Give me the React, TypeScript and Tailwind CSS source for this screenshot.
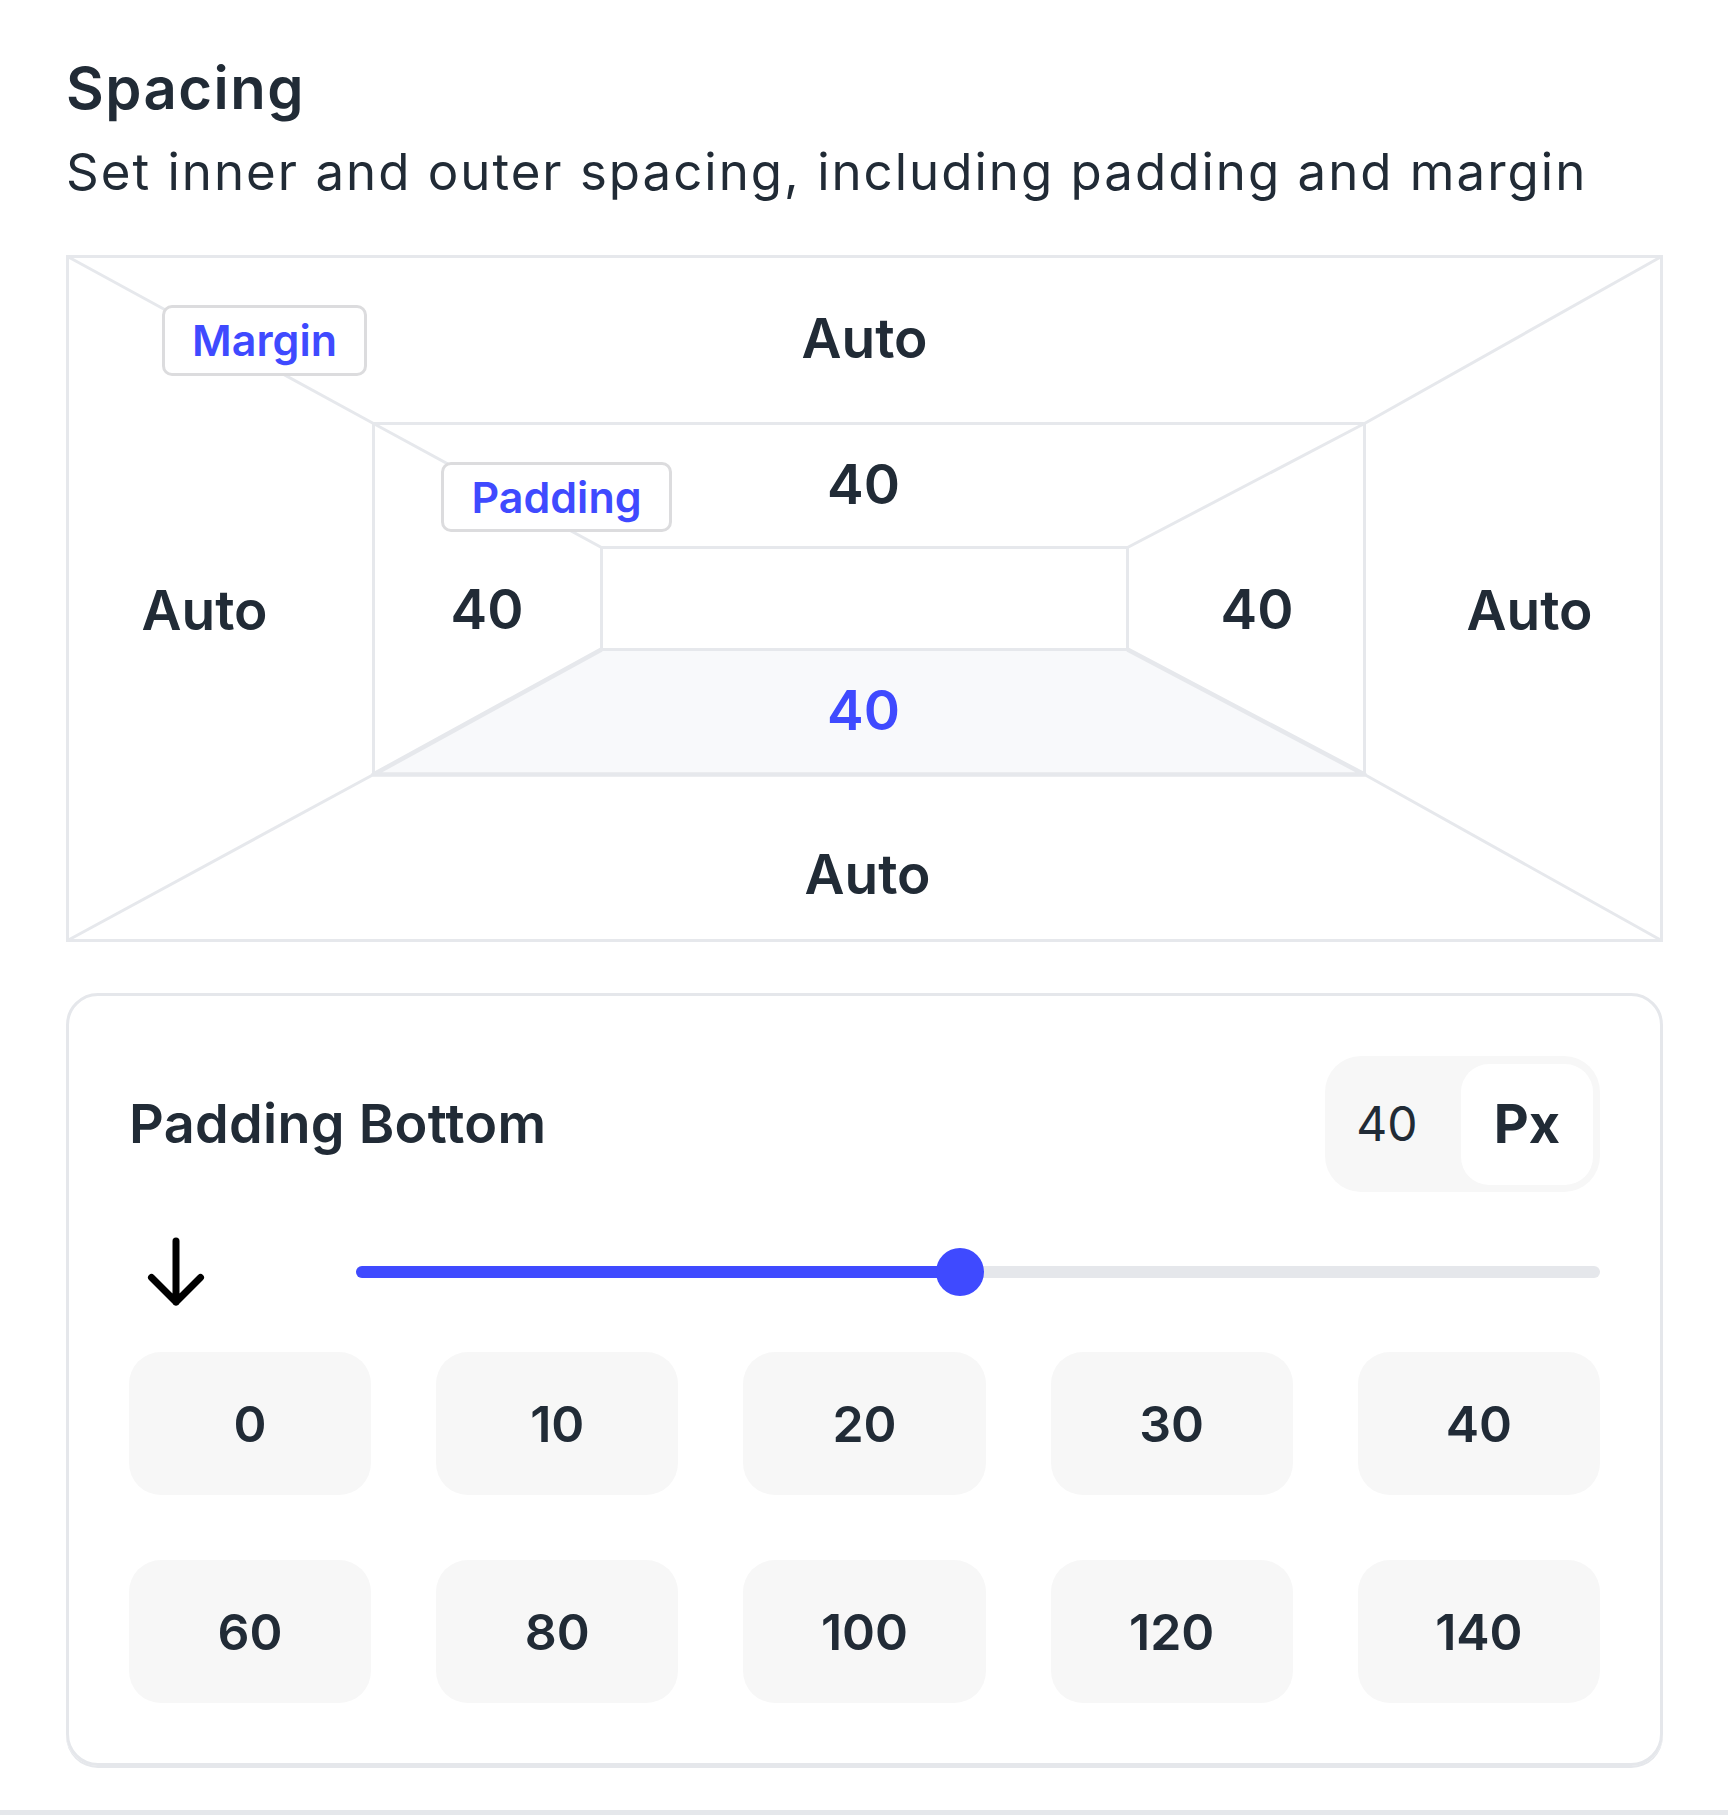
import React from 'react';

const presets = ['0', '10', '20', '30', '40', '60', '80', '100', '120', '140'];

// diagram geometry (inside the outer box)
const W = 1597;
const H = 687;
const P = { l: 307.5, r: 1298.5, t: 168.5, b: 519.5 };
const C = { l: 535.5, r: 1061.5, t: 292.5, b: 394.5 };

function BoxLines() {
  const line = '#e6e8ec';
  return (
    <svg
      className="absolute inset-0"
      width={W}
      height={H}
      viewBox={`0 0 ${W} ${H}`}
      fill="none"
    >
      {/* selected: padding bottom */}
      <polygon
        points={`${C.l},${C.b} ${C.r},${C.b} ${P.r},${P.b} ${P.l},${P.b}`}
        fill="#f8f9fb"
      />
      <rect x={1.5} y={1.5} width={W - 3} height={H - 3} stroke={line} strokeWidth={3} />
      <rect x={P.l} y={P.t} width={P.r - P.l} height={P.b - P.t} stroke={line} strokeWidth={3} />
      <rect x={C.l} y={C.t} width={C.r - C.l} height={C.b - C.t} stroke={line} strokeWidth={3} />
      <g stroke={line} strokeWidth={3}>
        <line x1={1.5} y1={1.5} x2={P.l} y2={P.t} />
        <line x1={W - 1.5} y1={1.5} x2={P.r} y2={P.t} />
        <line x1={1.5} y1={H - 1.5} x2={P.l} y2={P.b} />
        <line x1={W - 1.5} y1={H - 1.5} x2={P.r} y2={P.b} />
        <line x1={P.l} y1={P.t} x2={C.l} y2={C.t} />
        <line x1={P.r} y1={P.t} x2={C.r} y2={C.t} />
      </g>
      <g stroke={line} strokeWidth={4.5} strokeLinejoin="round">
        <polyline points={`${C.l},${C.b} ${P.l},${P.b} ${P.r},${P.b} ${C.r},${C.b}`} />
      </g>
    </svg>
  );
}

function Badge({ label, className }: { label: string; className: string }) {
  return (
    <div
      className={
        'absolute flex items-center justify-center rounded-[10px] border-[3px] border-[#dcdcde] bg-white text-[43px] font-semibold leading-none text-[#3f4aff] ' +
        className
      }
    >
      {label}
    </div>
  );
}

function ArrowDown() {
  return (
    <svg width="64" height="70" viewBox="0 0 64 70" fill="none">
      <path
        d="M32 4v61M7.5 40.5 32 65l24.5-24.5"
        stroke="#000"
        strokeWidth="7"
        strokeLinecap="round"
        strokeLinejoin="round"
      />
    </svg>
  );
}

export default function App() {
  return (
    <div className="flex h-[1815px] flex-col bg-white font-['Inter',_'Noto_Sans',_sans-serif] text-[#212b36]">
      <div className="flex-1 px-[66px] pt-[59px]">
        {/* --- encabezado --- */}
        <h1 className="text-[58px] font-semibold leading-none tracking-[1.5px]">Spacing</h1>
        <p className="mt-[29px] text-[51px] leading-none tracking-[2px]">
          Set inner and outer spacing, including padding and margin
        </p>

        {/* --- diagrama de caja --- */}
        <div className="relative mt-[58px] h-[687px] w-[1597px] text-[55px] font-semibold leading-none">
          <BoxLines />
          <div className="relative flex h-full flex-col">
            <div className="flex h-[167px] items-center justify-center">Auto</div>
            <div className="flex h-[352px]">
              <div className="flex w-[307px] items-center justify-center pr-[30px] pt-[24px]">Auto</div>
              <div className="flex w-[991px] flex-col">
                <div className="flex h-[124px] items-center justify-center pr-[10px]">40</div>
                <div className="flex h-[102px]">
                  <div className="flex w-[228px] items-center justify-center pt-[24px]">40</div>
                  <div className="w-[527px]" />
                  <div className="flex w-[236px] items-center justify-center pl-[22px] pt-[24px]">40</div>
                </div>
                <div className="flex h-[125px] items-center justify-center pr-[10px] text-[#3f4aff]">40</div>
              </div>
              <div className="flex w-[299px] items-center justify-center pl-[32px] pt-[24px]">Auto</div>
            </div>
            <div className="flex h-[168px] items-center justify-center pl-[6px] pt-[32px]">Auto</div>
          </div>
          <Badge label="Margin" className="left-[96px] top-[50px] h-[71px] w-[205px]" />
          <Badge label="Padding" className="left-[375px] top-[207px] h-[70px] w-[231px]" />
        </div>

        {/* --- panel de ajuste --- */}
        <div className="mt-[51px] w-[1597px] rounded-[32px] border-[3px] border-[#e5e7eb] p-[60px] shadow-[0_2px_0_#e5e7eb]">
          <div className="flex h-[136px] items-center justify-between">
            <h2 className="text-[54px] font-semibold leading-none tracking-[0.3px]">Padding Bottom</h2>
            <div className="flex h-[136px] w-[275px] items-center rounded-[36px] bg-[#f7f7f7] py-[7px] pr-[7px]">
              <span className="flex-1 pr-[12px] text-center text-[48px] leading-none">40</span>
              <span className="flex h-[121px] w-[132px] items-center justify-center rounded-[28px] bg-white text-[54px] font-bold leading-none">
                Px
              </span>
            </div>
          </div>

          <div className="flex h-[160px] items-center">
            <div className="flex w-[227px] items-center pl-[15px]">
              <ArrowDown />
            </div>
            <div className="relative h-[12px] flex-1 rounded-full bg-[#e5e7eb]">
              <div className="h-full w-[604px] rounded-full bg-[#3f4aff]" />
              <div className="absolute left-[580px] top-[-18px] h-[48px] w-[48px] rounded-full bg-[#3f4aff]" />
            </div>
          </div>

          <div className="grid grid-cols-5 gap-[65px]">
            {presets.map((v) => (
              <button
                key={v}
                className="flex h-[143px] items-center justify-center rounded-[32px] bg-[#f7f7f7] text-[50px] font-semibold leading-none text-[#212b36]"
              >
                {v}
              </button>
            ))}
          </div>
        </div>
      </div>
      <div className="h-[5px] bg-[#e5e7eb]" />
    </div>
  );
}
